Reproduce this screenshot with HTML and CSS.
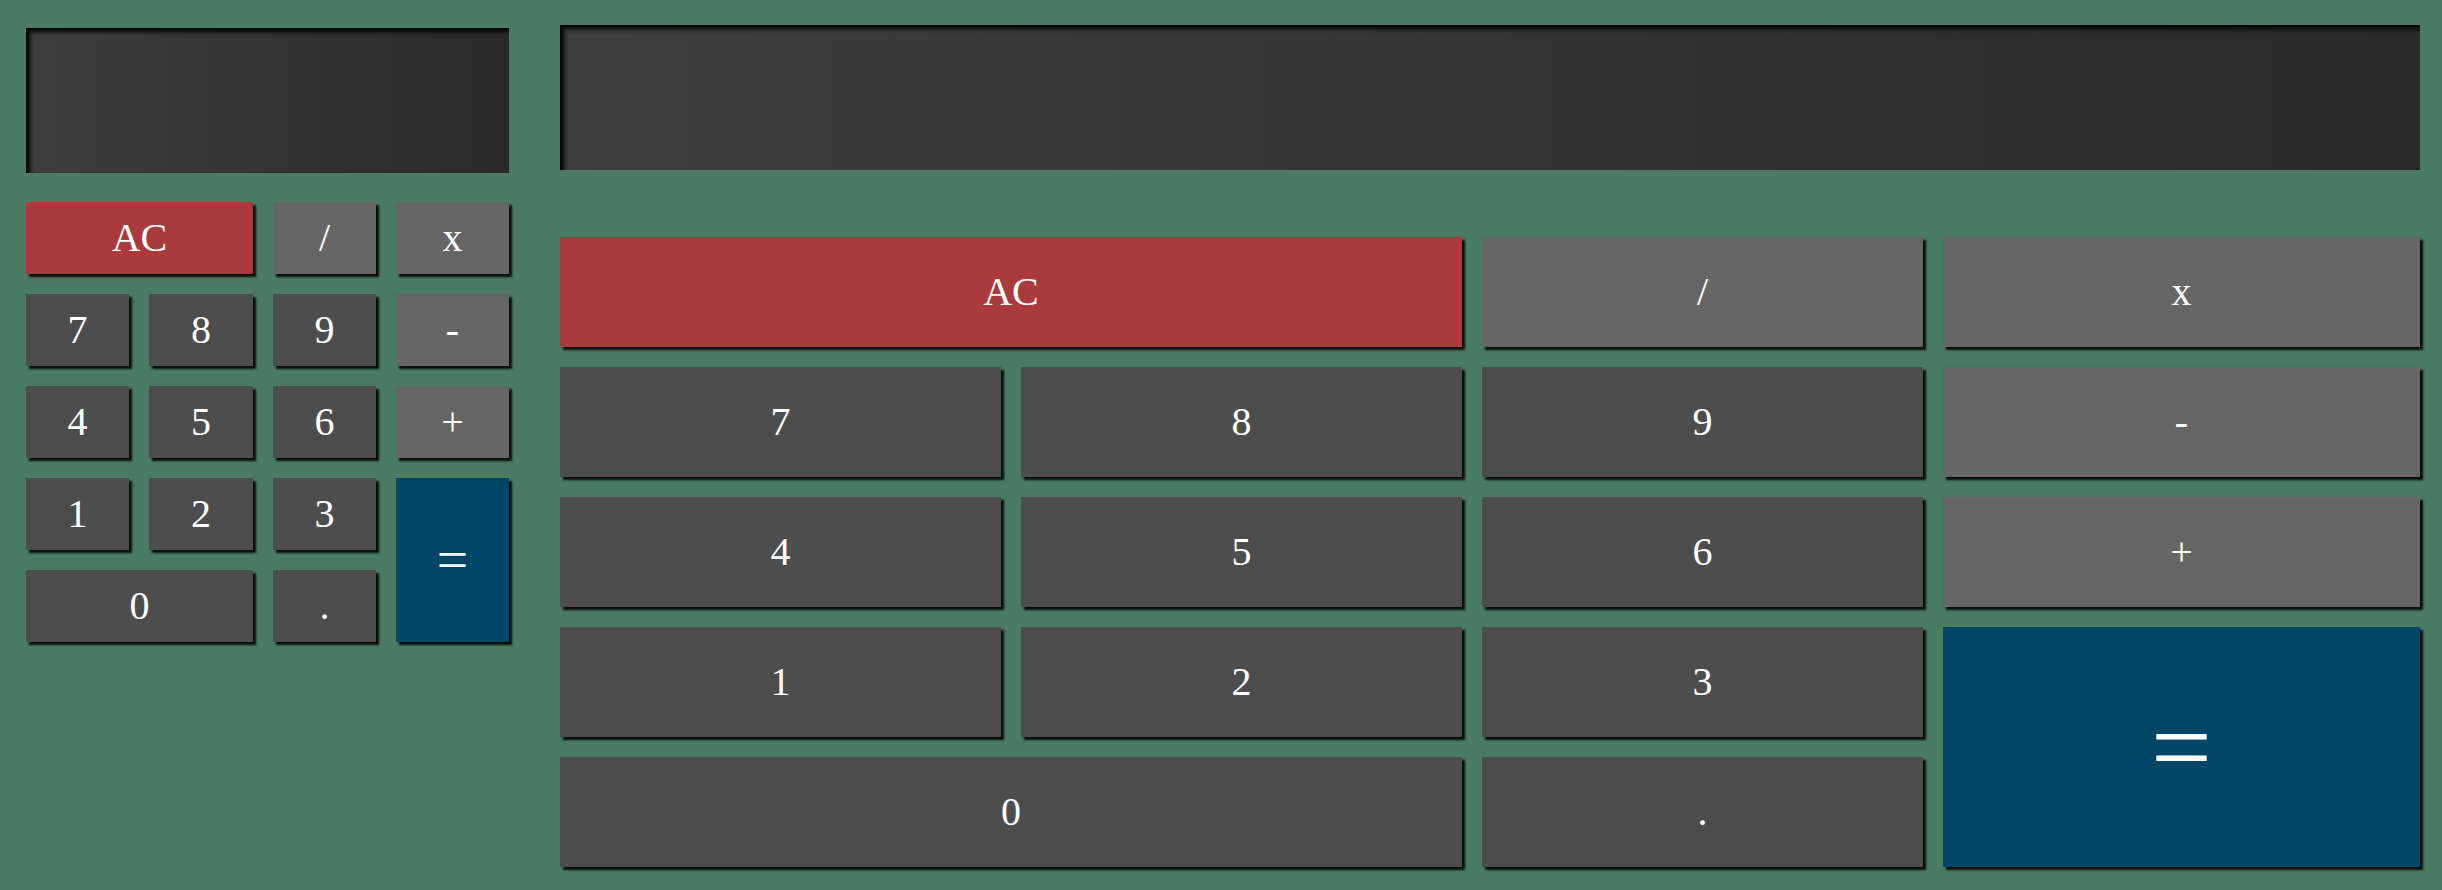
FILE: index.html
```html
<!DOCTYPE html>
<html lang="en">
<head>
<meta charset="utf-8">
<title>Calculator</title>
<link rel="stylesheet" href="styles.css">
</head>
<body>
<main class="page">
  <section class="calc calc-small">
    <div class="display"></div>
    <div class="keys">
      <div class="key key-clear wide">AC</div>
      <div class="key key-op">/</div>
      <div class="key key-op">x</div>
      <div class="key">7</div>
      <div class="key">8</div>
      <div class="key">9</div>
      <div class="key key-op">-</div>
      <div class="key">4</div>
      <div class="key">5</div>
      <div class="key">6</div>
      <div class="key key-op">+</div>
      <div class="key">1</div>
      <div class="key">2</div>
      <div class="key">3</div>
      <div class="key key-equals tall">=</div>
      <div class="key wide">0</div>
      <div class="key">.</div>
    </div>
  </section>
  <section class="calc calc-large">
    <div class="display"></div>
    <div class="keys">
      <div class="key key-clear wide">AC</div>
      <div class="key key-op">/</div>
      <div class="key key-op">x</div>
      <div class="key">7</div>
      <div class="key">8</div>
      <div class="key">9</div>
      <div class="key key-op">-</div>
      <div class="key">4</div>
      <div class="key">5</div>
      <div class="key">6</div>
      <div class="key key-op">+</div>
      <div class="key">1</div>
      <div class="key">2</div>
      <div class="key">3</div>
      <div class="key key-equals tall">=</div>
      <div class="key wide">0</div>
      <div class="key">.</div>
    </div>
  </section>
</main>
</body>
</html>
```

FILE: styles.css
```css
html, body {
  margin: 0;
  padding: 0;
}

body {
  background: #497c62;
  font-family: "Liberation Serif", "Times New Roman", serif;
  color: #ffffff;
  width: 2442px;
  height: 890px;
  overflow: hidden;
}

.page {
  display: flex;
  align-items: flex-start;
  gap: 51px;
  padding: 25px 22px 0 26px;
}

.calc {
  display: flex;
  flex-direction: column;
}

.calc-small {
  width: 483px;
  margin-top: 3px;
  gap: 29px;
}

.calc-large {
  flex: 1;
  gap: 67px;
}

.display {
  height: 145px;
  background: linear-gradient(to right, #3e3e3e, #292929);
  box-shadow: inset 4px 4px 4px rgba(0, 0, 0, 0.95);
}

.keys {
  display: grid;
  column-gap: 20px;
  row-gap: 20px;
}

.calc-small .keys {
  grid-template-columns: 103px 104px 103px 113px;
  grid-template-rows: repeat(5, 72px);
}

.calc-large .keys {
  grid-template-columns: 441px 441px 441px 1fr;
  grid-template-rows: repeat(5, 110px);
}

.key {
  display: flex;
  align-items: center;
  justify-content: center;
  background: #4d4d4d;
  font-size: 40px;
  line-height: 1;
  box-shadow: 3px 3px 2px rgba(0, 0, 0, 0.9);
}

.key-op {
  background: #666666;
}

.key-clear {
  background: #aa3a3b;
}

.key-equals {
  background: #004666;
}

.calc-small .key-equals {
  font-size: 56px;
}

.calc-large .key-equals {
  font-size: 108px;
}

.wide {
  grid-column: span 2;
}

.tall {
  grid-row: span 2;
}
```
